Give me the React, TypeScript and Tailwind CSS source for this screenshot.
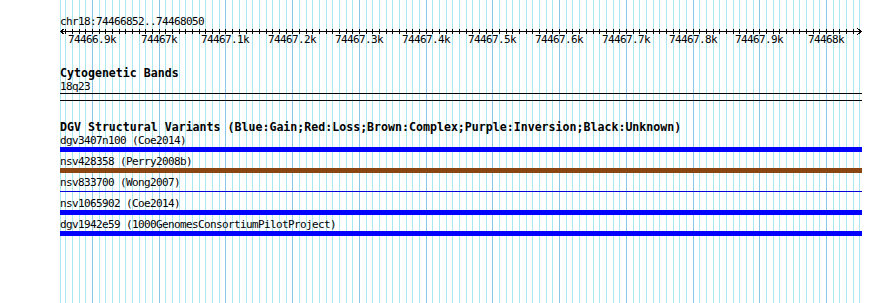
import React from "react";

const START = 74466852;
const END = 74468050;
const SCALE = 0.6673;
const xOf = (pos: number) => Math.max(60, 60 + Math.round((pos - START) * SCALE));

const gridPositions: number[] = [];
for (let p = 74466850; p <= END; p += 10) gridPositions.push(p);

const tickPositions: number[] = [];
for (let p = 74466860; p <= END; p += 10) tickPositions.push(p);

const labels = [
  [74466900, "74466.9k"],
  [74467000, "74467k"],
  [74467100, "74467.1k"],
  [74467200, "74467.2k"],
  [74467300, "74467.3k"],
  [74467400, "74467.4k"],
  [74467500, "74467.5k"],
  [74467600, "74467.6k"],
  [74467700, "74467.7k"],
  [74467800, "74467.8k"],
  [74467900, "74467.9k"],
  [74468000, "74468k"],
] as const;

type Row = { label: string; kind: "bar" | "line"; color: string };
const rows: Row[] = [
  { label: "dgv3407n100 (Coe2014)", kind: "bar", color: "bg-[#0000ff]" },
  { label: "nsv428358 (Perry2008b)", kind: "bar", color: "bg-[#8b4513]" },
  { label: "nsv833700 (Wong2007)", kind: "line", color: "bg-[#0000d8]" },
  { label: "nsv1065902 (Coe2014)", kind: "bar", color: "bg-[#0000ff]" },
  { label: "dgv1942e59 (1000GenomesConsortiumPilotProject)", kind: "bar", color: "bg-[#0000ff]" },
];

function Grid() {
  return (
    <svg className="absolute inset-0" width={890} height={303} shapeRendering="crispEdges">
      {gridPositions.map((p) => {
        const x = xOf(p) + 0.5;
        const major = p % 100 === 0;
        return (
          <line
            key={p}
            x1={x}
            x2={x}
            y1={0}
            y2={303}
            stroke={major ? "#88c8e8" : "#a8e8f0"}
            strokeWidth={1}
          />
        );
      })}
    </svg>
  );
}

function Ruler() {
  return (
    <svg width={802} height={39} className="block" shapeRendering="crispEdges">
      <line x1={0} x2={802} y1={3.5} y2={3.5} stroke="#000" strokeWidth={1} />
      <polyline points="4.5,0.5 0.5,3.5 4.5,6.5" fill="none" stroke="#000" strokeWidth={1} />
      <polyline points="797.5,0.5 801.5,3.5 797.5,6.5" fill="none" stroke="#000" strokeWidth={1} />
      {tickPositions.map((p) => {
        const x = xOf(p) - 60 + 0.5;
        return <line key={p} x1={x} x2={x} y1={1} y2={6} stroke="#000" strokeWidth={1} />;
      })}
      {labels.map(([p, t]) => (
        <text
          key={p}
          x={xOf(p) - 60 - t.length * 3}
          y={15}
          fontFamily="'DejaVu Sans Mono', monospace"
          fontSize={11}
          letterSpacing={-0.62}
          fill="#000"
        >
          {t}
        </text>
      ))}
    </svg>
  );
}

export default function App() {
  return (
    <div className="relative w-[890px] h-[303px] overflow-hidden bg-white text-black font-['DejaVu_Sans_Mono',monospace]">
      <Grid />
      <div className="relative flex w-[862px] flex-col pl-[60px] pt-[15px]">
        <div className="h-[13px] whitespace-pre text-[11px] leading-[13px] tracking-[-0.62px]">chr18:74466852..74468050</div>
        <Ruler />
        <div className="h-[13px] whitespace-pre text-[11.6px] font-bold leading-[13px]">Cytogenetic Bands</div>
        <div className="h-[13px] whitespace-pre text-[11px] leading-[13px] tracking-[-0.62px]">18q23</div>
        <div className="h-[8px] w-[802px] border-y border-black" />
        <div className="mt-[20px] h-[13px] whitespace-pre text-[11.6px] font-bold leading-[13px]">
          DGV Structural Variants (Blue:Gain;Red:Loss;Brown:Complex;Purple:Inversion;Black:Unknown)
        </div>
        {rows.map((r) => (
          <div key={r.label} className="mb-[3px] flex flex-col">
            <div className="h-[13px] whitespace-pre text-[11px] leading-[13px] tracking-[-0.62px]">{r.label}</div>
            {r.kind === "bar" ? (
              <div className={`h-[5px] w-[802px] ${r.color}`} />
            ) : (
              <div className="flex h-[5px] w-[802px] items-center">
                <div className={`h-px w-full ${r.color}`} />
              </div>
            )}
          </div>
        ))}
      </div>
    </div>
  );
}
